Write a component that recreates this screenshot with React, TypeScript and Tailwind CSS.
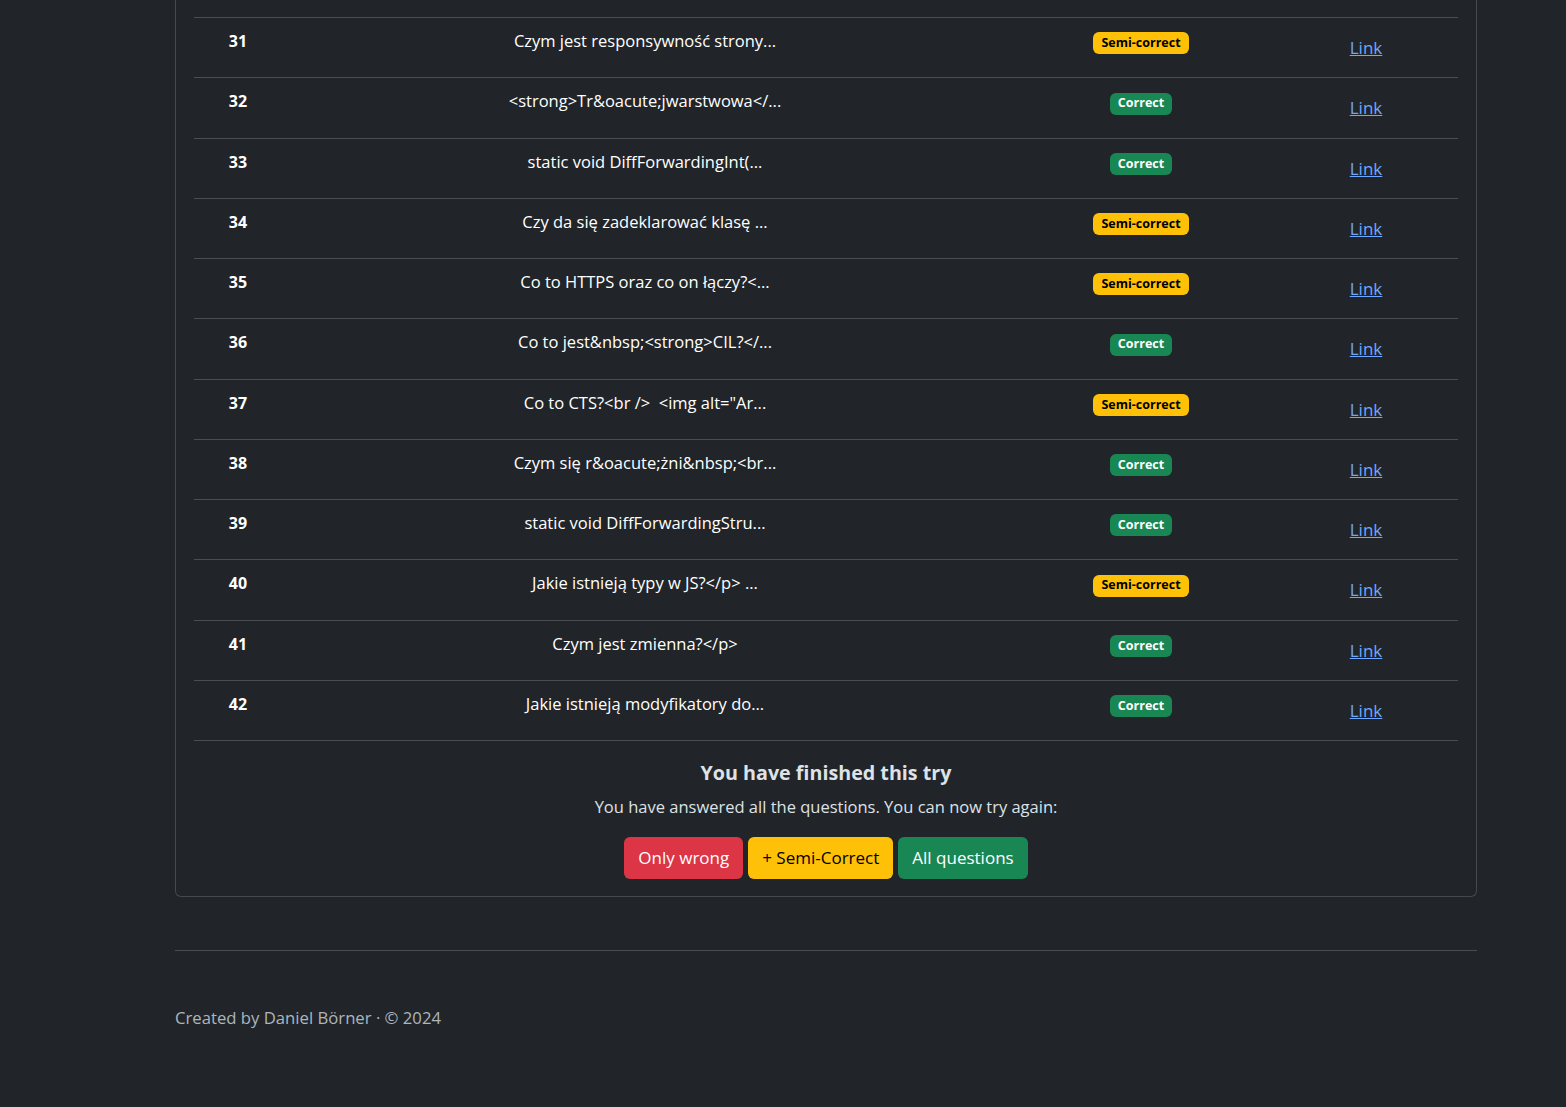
import React from "react";

type Row = { n: number; q: string; s: "semi" | "ok" };

const rows: Row[] = [
  { n: 31, q: "Czym jest responsywność strony...", s: "semi" },
  { n: 32, q: "<strong>Tr&oacute;jwarstwowa</...", s: "ok" },
  { n: 33, q: "static void DiffForwardingInt(...", s: "ok" },
  { n: 34, q: "Czy da się zadeklarować klasę ...", s: "semi" },
  { n: 35, q: "Co to HTTPS oraz co on łączy?<...", s: "semi" },
  { n: 36, q: "Co to jest&nbsp;<strong>CIL?</...", s: "ok" },
  { n: 37, q: "Co to CTS?<br />\u00a0 <img alt=\"Ar...", s: "semi" },
  { n: 38, q: "Czym się r&oacute;żni&nbsp;<br...", s: "ok" },
  { n: 39, q: "static void DiffForwardingStru...", s: "ok" },
  { n: 40, q: "Jakie istnieją typy w JS?</p> ...", s: "semi" },
  { n: 41, q: "Czym jest zmienna?</p>", s: "ok" },
  { n: 42, q: "Jakie istnieją modyfikatory do...", s: "ok" },
];

function Badge({ s }: { s: Row["s"] }) {
  if (s === "semi")
    return (
      <span className="inline-flex h-[22px] items-center rounded-[6px] bg-[#ffc107] px-[8px] text-[12.5px] font-bold leading-none text-black">
        Semi-correct
      </span>
    );
  return (
    <span className="inline-flex h-[22px] items-center rounded-[6px] bg-[#198754] px-[8px] text-[12.5px] font-bold leading-none text-white">
      Correct
    </span>
  );
}

export default function App() {
  return (
    <div
      className="min-h-[1107px] w-full overflow-hidden bg-[#212529] text-[#dee2e6]"
      style={{ fontFamily: "'Open Sans', 'Noto Sans', sans-serif" }}
    >
      <div className="ml-[175px] w-[1302px]">
        <div className="rounded-b-[6px] border border-t-0 border-[#45494d] px-[18px] pb-[17px]">
          <div className="h-[18px] border-b border-[#4a4e52]" />
          {rows.map((r) => (
            <div
              key={r.n}
              className="grid h-[60.25px] grid-cols-[88px_726px_266px_184px] border-b border-[#4a4e52] text-white"
            >
              <div className="pt-[11px] text-center text-[16px] font-bold leading-[24px]">{r.n}</div>
              <div className="pt-[11px] text-center text-[16.5px] leading-[24px]">{r.q}</div>
              <div className="pt-[11px] text-center">
                <Badge s={r.s} />
              </div>
              <div className="pt-[17px] text-center text-[17px] leading-[26px]">
                <a href="#" className="text-[#6ea8fe] underline">
                  Link
                </a>
              </div>
            </div>
          ))}
          <div className="flex flex-col items-center pt-[20px]">
            <h5 className="text-[19.7px] font-bold leading-[24px] text-[#dee2e6]">You have finished this try</h5>
            <p className="mt-[10px] text-[16.5px] leading-[24px] text-[#dee2e6]">
              You have answered all the questions. You can now try again:
            </p>
            <div className="mt-[18px] flex gap-[5px]">
              <button className="h-[42px] rounded-[6px] bg-[#dc3545] px-[14px] text-[17px] text-white">Only wrong</button>
              <button className="h-[42px] rounded-[6px] bg-[#ffc107] px-[14px] text-[17px] text-black">+ Semi-Correct</button>
              <button className="h-[42px] rounded-[6px] bg-[#198754] px-[14px] text-[17px] text-white">All questions</button>
            </div>
          </div>
        </div>
        <div className="mt-[53px] border-t border-[#4a4e52]" />
        <div className="mt-[54px] text-[16.7px] leading-[26px] text-[#adb5bd]">Created by Daniel Börner · © 2024</div>
      </div>
    </div>
  );
}
